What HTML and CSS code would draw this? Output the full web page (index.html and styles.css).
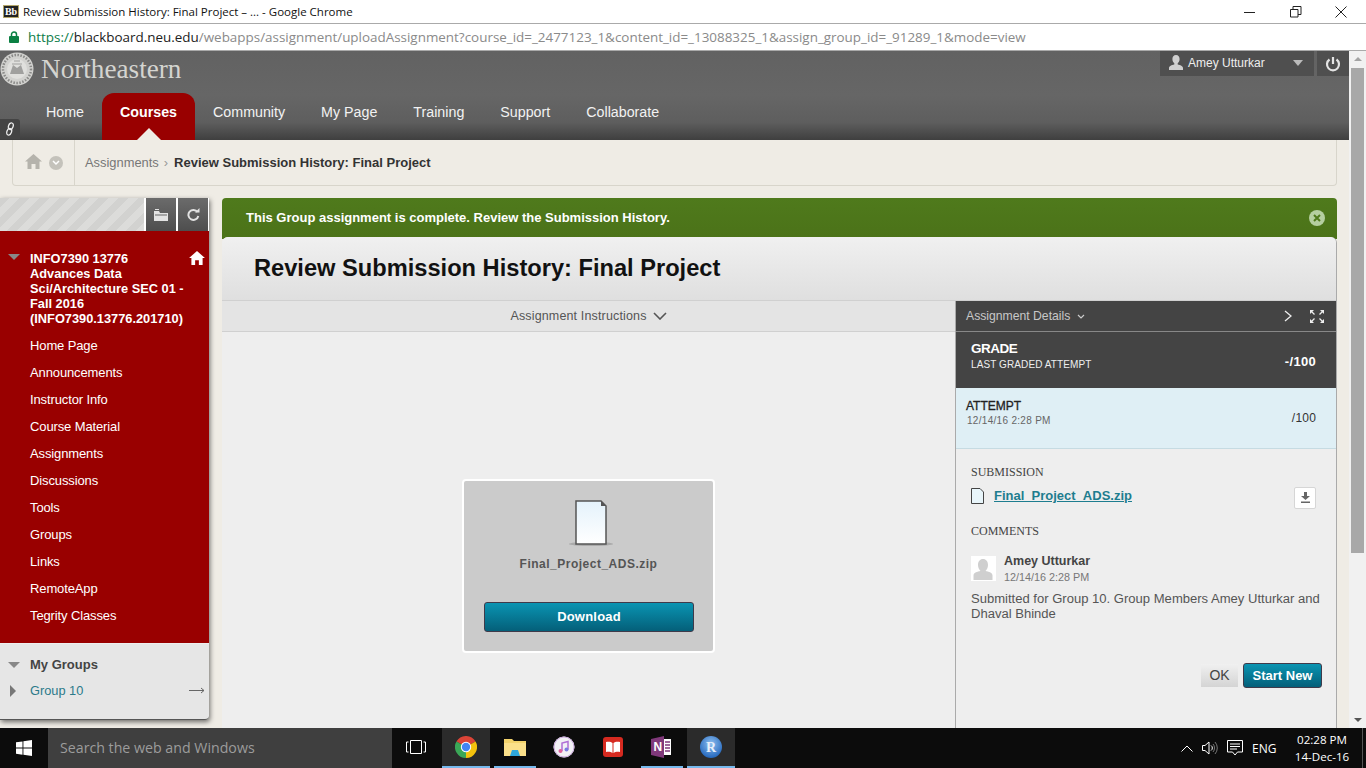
FILE: index.html
```html
<!DOCTYPE html>
<html lang="en">
<head>
    <meta charset="UTF-8">
    <title>Review Submission History: Final Project</title>
    <link rel="stylesheet" href="styles.css">
</head>
<body>
    <div class="titlebar">
        <span class="favicon">Bb</span>
        <span class="window-title">Review Submission History: Final Project – ... - Google Chrome</span>
        <div class="window-controls">
            <svg width="12" height="12" viewBox="0 0 12 12"><path d="M0 6.5h11" stroke="#222" fill="none"/></svg>
            <svg width="12" height="12" viewBox="0 0 12 12"><path d="M.5 3.500h7.500v7.500h-7.500zM3 3V.5h8v8H8" stroke="#222" fill="none"/></svg>
            <svg width="12" height="12" viewBox="0 0 12 12"><path d="M.5 .5l11 11M11.500 .5l-11 11" stroke="#222" fill="none"/></svg>
        </div>
    </div>
    <div class="addressbar">
        <svg width="10" height="12" viewBox="0 0 10 12"><path d="M2.500 5V3.500a2.500 2.500 0 0 1 5 0V5" stroke="#0b8043" stroke-width="1.500" fill="none"/><rect y="5" width="10" height="7" rx="1" fill="#0b8043"/></svg>
        <span class="url"><span class="url-scheme">https://</span><span class="url-host">blackboard.neu.edu</span>/webapps/assignment/uploadAssignment?course_id=_2477123_1&amp;content_id=_13088325_1&amp;assign_group_id=_91289_1&amp;mode=view</span>
    </div>

    <div class="viewport">
        <div class="page">
            <header class="header">
                <div class="brand-row">
                    <svg class="seal" width="34" height="34" viewBox="0 0 34 34">
                        <circle cx="17" cy="17" r="16.500" fill="#d2d2cf"/>
                        <circle cx="17" cy="17" r="14" fill="none" stroke="#8a8a88" stroke-dasharray="1.500 1.500" stroke-width="2.500"/>
                        <circle cx="17" cy="17" r="10" fill="#e0e0dd"/>
                        <path d="M10 22l3-9 4 3 4-3 3 9z" fill="#a0a09e"/>
                        <path d="M12 12h10M14 9h6" stroke="#a0a09e"/>
                    </svg>
                    <span class="brand">Northeastern</span>
                    <div class="user-menu">
                        <svg width="16" height="15" viewBox="0 0 16 15"><path d="M8 0c2.400 0 3.600 1.800 3.600 4 0 2-1 3.600-1.900 4.300v1.200c2.600.6 5.300 1.500 5.300 3.500V15H1v-2c0-2 2.700-2.900 5.300-3.500V8.300C5.400 7.600 4.400 6 4.400 4c0-2.200 1.200-4 3.600-4z" fill="#cfcfcf"/></svg>
                        <span class="user-name">Amey Utturkar</span>
                        <span class="user-caret"></span>
                    </div>
                    <div class="power">
                        <svg width="16" height="16" viewBox="0 0 16 16"><path d="M8 1v7M4.500 3.500a6 6 0 1 0 7 0" stroke="#e4e4e4" stroke-width="2.200" fill="none"/></svg>
                    </div>
                </div>
                <nav class="nav">
                    <a>Home</a>
                    <a class="active">Courses</a>
                    <a>Community</a>
                    <a>My Page</a>
                    <a>Training</a>
                    <a>Support</a>
                    <a>Collaborate</a>
                </nav>
                <span class="link-badge">
                    <svg width="10" height="14" viewBox="0 0 10 14"><ellipse cx="5.800" cy="4.200" rx="2.300" ry="3.400" transform="rotate(20 5.800 4.200)" stroke="#eee" stroke-width="1.300" fill="none"/><ellipse cx="4.200" cy="9.800" rx="2.300" ry="3.400" transform="rotate(20 4.200 9.800)" stroke="#eee" stroke-width="1.300" fill="none"/></svg>
                </span>
            </header>

            <div class="crumb-wrap">
                <div class="crumbs">
                    <div class="crumb-icons">
                        <svg width="17" height="15" viewBox="0 0 17 15"><path d="M8.500 0L17 7.500h-2.500V15h-4v-5h-4v5h-4V7.500H0z" fill="#b5b3ac"/></svg>
                        <span class="crumb-down">
                            <svg width="8" height="6" viewBox="0 0 8 6"><path d="M1 1l3 3 3-3" stroke="#fff" stroke-width="1.500" fill="none"/></svg>
                        </span>
                    </div>
                    <span class="crumb-link">Assignments</span>
                    <span class="crumb-sep">›</span>
                    <span class="crumb-current">Review Submission History: Final Project</span>
                </div>
            </div>

            <div class="main">
                <aside class="sidebar">
                    <div class="side-tools">
                        <div class="hatch"></div>
                        <div class="tool">
                            <svg width="14" height="12" viewBox="0 0 14 12"><path d="M0 2h5l1 2h8v8H0z" fill="#e2e2e2"/><path d="M1 0h4v1H1z" fill="#e2e2e2"/><path d="M1 6h12" stroke="#666"/></svg>
                        </div>
                        <div class="tool">
                            <svg width="13" height="13" viewBox="0 0 13 13"><path d="M10.500 4A5 5 0 1 0 11.300 8" stroke="#e2e2e2" stroke-width="2" fill="none"/><path d="M8 4.500h4.500V0z" fill="#e2e2e2"/></svg>
                        </div>
                    </div>
                    <div class="course-menu">
                        <div class="course-head">
                            <span class="tri-down"></span>
                            <span class="course-name">INFO7390 13776 Advances Data Sci/Architecture SEC 01 - Fall 2016 (INFO7390.13776.201710)</span>
                            <svg class="course-home" width="16" height="14" viewBox="0 0 17 15"><path d="M8.500 0L17 7.500h-2.500V15h-4v-5h-4v5h-4V7.500H0z" fill="#fff"/></svg>
                        </div>
                        <ul class="course-links">
                            <li>Home Page</li>
                            <li>Announcements</li>
                            <li>Instructor Info</li>
                            <li>Course Material</li>
                            <li>Assignments</li>
                            <li>Discussions</li>
                            <li>Tools</li>
                            <li>Groups</li>
                            <li>Links</li>
                            <li>RemoteApp</li>
                            <li>Tegrity Classes</li>
                        </ul>
                    </div>
                    <div class="groups">
                        <div class="groups-head"><span class="tri-down"></span>My Groups</div>
                        <div class="group-row">
                            <span class="tri-right"></span>
                            <span class="group-name">Group 10</span>
                            <span class="group-arrow">
                                <svg width="16" height="7" viewBox="0 0 16 7"><path d="M0 3.500h15M12 1l3 2.500L12 6" stroke="#666" fill="none"/></svg>
                            </span>
                        </div>
                    </div>
                </aside>

                <section class="content">
                    <div class="banner">
                        <span>This Group assignment is complete. Review the Submission History.</span>
                        <span class="banner-close">
                            <svg width="8" height="8" viewBox="0 0 8 8"><path d="M1 1l6 6M7 1L1 7" stroke="#4f7a1c" stroke-width="2"/></svg>
                        </span>
                    </div>
                    <div class="panel">
                        <h1 class="panel-title">Review Submission History: Final Project</h1>
                        <div class="panel-body">
                            <div class="viewer">
                                <div class="instructions">Assignment Instructions
                                    <svg width="14" height="8" viewBox="0 0 14 8"><path d="M1 1l6 6 6-6" stroke="#555" stroke-width="1.600" fill="none"/></svg>
                                </div>
                                <div class="viewer-stage">
                                    <div class="file-card">
                                        <svg class="file-big" width="44" height="48" viewBox="0 0 44 48">
                                            <defs>
                                                <linearGradient id="paper" x1="0" y1="0" x2="0" y2="1"><stop offset="0" stop-color="#e4f2fb"/><stop offset="1" stop-color="#fff"/></linearGradient>
                                            </defs>
                                            <ellipse cx="22" cy="44" rx="22" ry="2" fill="#aaa"/>
                                            <path d="M7 1h25l5 5v38H7z" fill="url(#paper)" stroke="#555" stroke-width="1.500"/>
                                            <path d="M32 1l5 5h-5z" fill="#555"/>
                                        </svg>
                                        <div class="file-name">Final_Project_ADS.zip</div>
                                        <a class="btn-download">Download</a>
                                    </div>
                                </div>
                            </div>

                            <div class="details">
                                <div class="details-head">
                                    <span>Assignment Details</span>
                                    <svg width="8" height="5" viewBox="0 0 8 5"><path d="M1 1l3 3 3-3" stroke="#ccc" stroke-width="1.200" fill="none"/></svg>
                                    <svg class="details-next" width="8" height="12" viewBox="0 0 8 12"><path d="M1 1l6 5-6 5" stroke="#eee" stroke-width="1.300" fill="none"/></svg>
                                    <svg width="16" height="15" viewBox="0 0 16 15"><path d="M1 1h4L1 5zM15 1h-4l4 4zM1 14h4l-4-4zM15 14h-4l4-4z" fill="#eee"/><path d="M2 2l3.500 3.500M14 2l-3.500 3.500M2 13l3.500-3.500M14 13l-3.500-3.500" stroke="#eee" stroke-width="1.300"/></svg>
                                </div>
                                <div class="grade-row">
                                    <div>
                                        <div class="grade-label">GRADE</div>
                                        <div class="grade-sub">LAST GRADED ATTEMPT</div>
                                    </div>
                                    <div class="grade-value">-/100</div>
                                </div>
                                <div class="attempt-row">
                                    <div>
                                        <div class="attempt-label">ATTEMPT</div>
                                        <div class="attempt-date">12/14/16 2:28 PM</div>
                                    </div>
                                    <div class="attempt-value">/100</div>
                                </div>
                                <div class="details-body">
                                    <div class="section-label">SUBMISSION</div>
                                    <div class="sub-row">
                                        <svg width="13" height="16" viewBox="0 0 13 16"><path d="M.5.500h8.500l3.500 3.500v11.500H.5z" fill="#e8f5fa" stroke="#444"/></svg>
                                        <a class="sub-link">Final_Project_ADS.zip</a>
                                        <span class="sub-download">
                                            <svg width="9" height="11" viewBox="0 0 9 11"><path d="M3 0h3v4h3L4.500 8 0 4h3zM0 9.500h9V11H0z" fill="#666"/></svg>
                                        </span>
                                    </div>
                                    <div class="section-label comments-label">COMMENTS</div>
                                    <div class="comment-head">
                                        <span class="avatar">
                                            <svg width="24" height="24" viewBox="0 0 24 24"><path d="M12 3c3 0 5 2.500 5 6 0 3-1.500 5-2.500 6 3 .6 7 1.500 7 4.500V24H2.500v-4.500c0-3 4-3.900 7-4.500C8.500 14 7 12 7 9c0-3.500 2-6 5-6z" fill="#cfcfcf"/></svg>
                                        </span>
                                        <div class="comment-meta">
                                            <div class="comment-author">Amey Utturkar</div>
                                            <div class="comment-date">12/14/16 2:28 PM</div>
                                        </div>
                                    </div>
                                    <p class="comment-text">Submitted for Group 10. Group Members Amey Utturkar and Dhaval Bhinde</p>
                                    <div class="actions">
                                        <a class="btn-ok">OK</a>
                                        <a class="btn-new">Start New</a>
                                    </div>
                                </div>
                            </div>
                        </div>
                    </div>
                </section>
            </div>
        </div>
        <div class="scrollbar">
            <span class="scroll-up"></span>
            <div class="scroll-track"><div class="scroll-thumb"></div></div>
            <span class="scroll-down"></span>
        </div>
    </div>

    <footer class="taskbar">
        <div class="start">
            <svg width="16" height="16" viewBox="0 0 16 16"><path d="M0 2.300l6.500-.9v6.200H0zM7.400 1.300L16 0v7.600H7.400zM0 8.500h6.500v6.200L0 13.800zM7.400 8.500H16V16l-8.600-1.200z" fill="#fff"/></svg>
        </div>
        <div class="search">Search the web and Windows</div>
        <div class="task-icons">
            <div class="task task-view">
                <svg width="20" height="14" viewBox="0 0 20 14"><path d="M4.500.5h11v13h-11zM2.500 2H.5v10h2M17.500 2h2v10h-2" stroke="#fff" fill="none"/></svg>
            </div>
            <div class="task task-on">
                <svg width="22" height="22" viewBox="0 0 22 22">
                    <path d="M11 11L1.470 5.500A11 11 0 0 1 20.530 5.500z" fill="#db4437"/>
                    <path d="M11 11L20.530 5.500A11 11 0 0 1 11 22z" fill="#f4c20d"/>
                    <path d="M11 11V22A11 11 0 0 1 1.470 5.500z" fill="#3aa757"/>
                    <circle cx="11" cy="11" r="5.200" fill="#fff"/>
                    <circle cx="11" cy="11" r="4.200" fill="#4285f4"/>
                </svg>
            </div>
            <div class="task task-open task-short">
                <svg width="22" height="18" viewBox="0 0 22 18"><path d="M0 1h8l2 2h12v15H0z" fill="#f3d36b"/><path d="M0 5h22v13H0z" fill="#fbe08a"/><path d="M8 12h6l2 6H6z" fill="#2fa8dc"/></svg>
            </div>
            <div class="task">
                <svg width="22" height="22" viewBox="0 0 22 22">
                    <circle cx="11" cy="11" r="10.500" fill="#f2f0f5"/>
                    <circle cx="11" cy="11" r="10" fill="none" stroke="#c9a8dc" stroke-width="1"/>
                    <path d="M9 15V7l6-1.500v8" stroke="#b06fd6" stroke-width="1.500" fill="none"/>
                    <circle cx="7.500" cy="15" r="2" fill="#e0609a"/>
                    <circle cx="13.500" cy="13.500" r="2" fill="#7a7ce0"/>
                </svg>
            </div>
            <div class="task">
                <svg width="20" height="20" viewBox="0 0 20 20"><rect width="20" height="20" rx="3" fill="#d62a20"/><path d="M3 5c2.500-.6 5-.4 6.500 1v10C8 14.800 5.500 14.600 3 15zM17 5c-2.500-.6-5-.4-6.500 1v10c1.500-1.200 4-1.400 6.500-1z" fill="#fff"/></svg>
            </div>
            <div class="task task-open">
                <svg width="22" height="22" viewBox="0 0 22 22"><path d="M0 3l13-3v22L0 19z" fill="#80397b"/><path d="M13 3h7v16h-7z" fill="#fff"/><path d="M14 6h5M14 9h5M14 12h5M14 15h5" stroke="#80397b" stroke-width="1.500"/><text x="2.500" y="15" class="onenote-letter">N</text></svg>
            </div>
            <div class="task task-on">
                <svg width="22" height="22" viewBox="0 0 22 22">
                    <defs>
                        <radialGradient id="rball" cx=".5" cy=".35" r=".7"><stop offset="0" stop-color="#8fc0f0"/><stop offset="1" stop-color="#1a5fb8"/></radialGradient>
                    </defs>
                    <circle cx="11" cy="11" r="11" fill="url(#rball)"/>
                    <text x="11" y="16" text-anchor="middle" class="r-letter">R</text>
                </svg>
            </div>
        </div>
        <div class="tray">
            <svg width="12" height="7" viewBox="0 0 12 7"><path d="M.5 6.500l5.500-5.500 5.500 5.500" stroke="#fff" fill="none"/></svg>
            <svg class="tray-sound" width="16" height="14" viewBox="0 0 16 14"><path d="M.5 4.500h2.500l4-3.500v12l-4-3.500H.5zM9 4.500a3 3 0 0 1 0 5" stroke="#fff" fill="none"/><path d="M11 3a6 6 0 0 1 0 8M13 1a9 9 0 0 1 0 12" stroke="#777" fill="none"/></svg>
            <svg class="tray-note" width="16" height="16" viewBox="0 0 16 16"><path d="M.5.500h15v11.500h-5l-2.500 3-2.500-3h-5zM3 4h10M3 6.500h10M3 9h7" stroke="#fff" fill="none"/></svg>
            <span class="tray-lang">ENG</span>
            <div class="clock"><div>02:28 PM</div><div>14-Dec-16</div></div>
            <span class="show-desktop"></span>
        </div>
    </footer>
</body>
</html>
```

FILE: styles.css
```css
* {
    box-sizing: border-box;
}
html, body {
    height: 100%;
}
body {
    margin: 0;
    display: flex;
    flex-direction: column;
    overflow: hidden;
    font-family: "Liberation Sans", Arial, sans-serif;
    background-color: #efece5;
}
svg {
    display: block;
    flex: none;
}

/* browser chrome */
.titlebar {
    height: 24px;
    flex: none;
    display: flex;
    align-items: center;
    padding-left: 3px;
    background-color: #fff;
    border-bottom: 1px solid #aaa;
}
.favicon {
    width: 16px;
    height: 13px;
    margin-right: 4px;
    background-color: #222;
    border: 1px solid #b5a76a;
    color: #fff;
    font: bold 10px/11px "Liberation Serif", serif;
    text-align: center;
}
.window-title {
    font: 11.5px "Open Sans", sans-serif;
    color: #111;
}
.window-controls {
    margin-left: auto;
    display: flex;
    gap: 33.5px;
    padding-right: 19px;
}
.addressbar {
    height: 27px;
    flex: none;
    display: flex;
    align-items: center;
    padding-left: 9px;
    background-color: #fff;
    border-bottom: 1px solid #aaa;
}
.url {
    margin-left: 9px;
    font: 13.43px "Open Sans", sans-serif;
    color: #8a8a8a;
}
.url-scheme {
    color: #0b7c47;
}
.url-host {
    color: #222;
}

/* page frame */
.viewport {
    flex: 1;
    min-height: 0;
    display: flex;
}
.page {
    flex: 1;
    min-width: 0;
    overflow: hidden;
    display: flex;
    flex-direction: column;
}
.scrollbar {
    width: 17px;
    flex: none;
    display: flex;
    flex-direction: column;
    align-items: center;
    background-color: #f1f1f1;
}
.scroll-up {
    margin-top: 6px;
    border: 4px solid transparent;
    border-top: 0;
    border-bottom: 4px solid #a3a3a3;
}
.scroll-track {
    flex: 1;
    width: 100%;
    padding: 7px 2px 0;
}
.scroll-thumb {
    height: 485px;
    background-color: #a8a8a8;
}
.scroll-down {
    margin-bottom: 6px;
    border: 4px solid transparent;
    border-bottom: 0;
    border-top: 4px solid #555;
}

/* site header */
.header {
    position: relative;
    height: 89px;
    flex: none;
    background: linear-gradient(#626262 0, #666 50%, #5e5e5e 80%, #3f3f3f 100%);
}
.brand-row {
    height: 42px;
    display: flex;
    align-items: flex-start;
}
.seal {
    margin-top: 1px;
}
.brand {
    margin: 3px 0 0 7px;
    font: 27.2px/30px "Liberation Serif", serif;
    color: #d4d4d0;
}
.user-menu {
    margin-left: auto;
    width: 154px;
    height: 25px;
    display: flex;
    align-items: center;
    padding: 0 8px 2px;
    background-color: #4f4f4f;
    color: #eee;
    font-size: 12px;
}
.user-name {
    margin-left: 4px;
}
.user-caret {
    margin-left: auto;
    margin-right: 3px;
    border: 5px solid transparent;
    border-bottom: 0;
    border-top: 6px solid #bbb;
}
.power {
    width: 32px;
    height: 25px;
    margin-left: 3px;
    display: flex;
    align-items: center;
    justify-content: center;
    background-color: #4f4f4f;
}
.nav {
    height: 47px;
    display: flex;
    padding-left: 28px;
}
.nav a {
    padding: 11px 18px 0;
    font-size: 14.25px;
    line-height: 16px;
    color: #f2f2f2;
}
.nav a.active {
    position: relative;
    background-color: #990000;
    border-radius: 12px 12px 0 0;
    font-weight: bold;
    color: #fff;
}
.nav a.active::after {
    content: "";
    position: absolute;
    left: 50%;
    bottom: 0;
    margin-left: -12px;
    border: 12px solid transparent;
    border-top: 0;
    border-bottom: 12px solid #efece5;
}
.link-badge {
    position: absolute;
    left: 0;
    bottom: 1px;
    width: 20px;
    height: 20px;
    display: flex;
    align-items: center;
    justify-content: center;
    background-color: #444;
    border-radius: 0 3px 0 0;
}

/* breadcrumbs */
.crumb-wrap {
    flex: none;
    padding: 0 12px;
    height: 46px;
}
.crumbs {
    height: 46px;
    display: flex;
    align-items: center;
    border: 1px solid #d8d5cb;
    border-top: 0;
    border-radius: 0 0 4px 4px;
    font-size: 12.9px;
    color: #777;
}
.crumb-icons {
    width: 62px;
    height: 100%;
    display: flex;
    align-items: center;
    gap: 7px;
    padding: 0 0 3px 12px;
    border-right: 1px solid #d8d5cb;
    margin-right: 10px;
}
.crumb-down {
    width: 14px;
    height: 14px;
    margin-top: 3px;
    border-radius: 50%;
    background-color: #c4c2bb;
    display: flex;
    align-items: center;
    justify-content: center;
}
.crumb-sep {
    margin: 0 6px 0 5px;
    color: #999;
}
.crumb-current {
    font-size: 13px;
    font-weight: bold;
    color: #333;
}

/* two columns */
.main {
    flex: 1;
    min-height: 0;
    display: flex;
    align-items: flex-start;
    padding-top: 12px;
}
.sidebar {
    width: 209px;
    flex: none;
    border-radius: 0 0 4px 0;
    box-shadow: 1px 2px 5px rgba(0, 0, 0, .55);
    font-size: 14px;
}
.side-tools {
    height: 33px;
    display: flex;
    background-color: #fff;
    gap: 2px;
}
.hatch {
    flex: 1;
    background: repeating-linear-gradient(135deg, #d2d2d0 0 7px, #dcdcda 7px 14px);
}
.tool {
    width: 30px;
    display: flex;
    align-items: center;
    justify-content: center;
    background: linear-gradient(#6b6b6b, #4e4e4e);
}
.tool:last-child {
    margin-right: 1px;
}
.course-menu {
    height: 412px;
    background-color: #990000;
    color: #fff;
    padding-top: 20px;
}
.tri-down {
    flex: none;
    width: 0;
    border: 6px solid transparent;
    border-bottom: 0;
    border-top: 6px solid #888;
}
.course-head {
    position: relative;
    display: flex;
    align-items: flex-start;
    padding-left: 8px;
    padding-right: 17px;
}
.course-head .tri-down {
    margin-top: 3px;
}
.course-name {
    margin-left: 10px;
    font-weight: bold;
    font-size: 12.8px;
    line-height: 15px;
    width: 160px;
}
.course-home {
    position: absolute;
    right: 4px;
    top: 0;
}
.course-links {
    list-style: none;
    margin: 6px 0 0;
    padding: 0 0 0 30px;
}
.course-links li {
    height: 27px;
    line-height: 27px;
    font-size: 13px;
    letter-spacing: -.12px;
}
.groups {
    height: 77px;
    padding-top: 13px;
    background-color: #e6e6e6;
    border-radius: 0 0 4px 0;
    border-bottom: 1px solid #555;
    border-top: 1px solid #eee;
}
.groups-head {
    display: flex;
    align-items: center;
    padding-left: 8px;
    font-weight: bold;
    font-size: 13px;
    line-height: 15px;
    color: #444;
}
.groups-head .tri-down {
    margin-right: 10px;
}
.group-row {
    display: flex;
    align-items: center;
    margin-top: 11px;
    padding: 0 4px 0 10px;
    color: #2b7a8a;
    line-height: 15px;
}
.tri-right {
    border: 6px solid transparent;
    border-right: 0;
    border-left: 6px solid #777;
    margin-right: 14px;
}
.group-name {
    font-size: 12.8px;
}
.group-arrow {
    margin-left: auto;
}

/* main column */
.content {
    width: 1115px;
    margin-left: 13px;
    flex: none;
}
.banner {
    height: 41px;
    display: flex;
    align-items: center;
    justify-content: space-between;
    padding: 0 12px 2px 24px;
    background: linear-gradient(#4f7a1c, #4b7218);
    border-radius: 4px 4px 0 0;
    color: #fff;
    font-weight: bold;
    font-size: 13px;
}
.banner-close {
    width: 16px;
    height: 16px;
    border-radius: 50%;
    background-color: #b5cfa0;
    display: flex;
    align-items: center;
    justify-content: center;
}
.panel {
    margin-top: -2px;
    background-color: #eee;
    border-radius: 6px 6px 0 0;
    border-right: 1px solid #aaa;
}
.panel-title {
    height: 64px;
    margin: 0;
    padding-left: 32px;
    background: linear-gradient(#f0f0f0, #dfdfdf);
    border-radius: 6px 6px 0 0;
    border-bottom: 1px solid #d0d0d0;
    font-size: 23.65px;
    line-height: 63px;
    color: #111;
}
.panel-body {
    display: flex;
}
.viewer {
    flex: 1;
    min-width: 0;
}
.instructions {
    height: 31px;
    display: flex;
    align-items: center;
    justify-content: center;
    gap: 6px;
    background-color: #e4e4e4;
    border-bottom: 1px solid #d0d0d0;
    font-size: 12.5px;
    letter-spacing: .15px;
    color: #555;
}
.viewer-stage {
    display: flex;
    justify-content: center;
    padding: 147px 0 80px 0;
}
.file-card {
    width: 253px;
    height: 174px;
    padding: 19px 20px 0;
    background-color: #cbcbcb;
    border: 2px solid #fff;
    border-radius: 4px;
    text-align: center;
    margin-left: -1px;
}
.file-big {
    margin: 0 auto;
    transform: translateX(3px);
}
.file-name {
    margin-top: 9px;
    padding-left: 1px;
    font-weight: bold;
    font-size: 12px;
    letter-spacing: .5px;
    color: #555;
}
.btn-download {
    display: block;
    width: 210px;
    height: 30px;
    margin-top: 31px;
    padding-left: 1px;
    border: 1px solid #3f3a4a;
    border-radius: 3px;
    background: linear-gradient(#0a94b2, #045f79);
    color: #fff;
    font-weight: bold;
    font-size: 13px;
    letter-spacing: .2px;
    line-height: 28px;
}

/* details column */
.details {
    width: 381px;
    flex: none;
    border-left: 1px solid #aaa;
}
.details-head {
    height: 31px;
    display: flex;
    align-items: center;
    gap: 7px;
    padding: 0 11px 0 10px;
    background-color: #444;
    border-bottom: 1px solid #888;
    font-size: 12.2px;
    color: #c8c8c8;
}
.details-next {
    margin-left: auto;
    margin-right: 10px;
}
.grade-row,
.attempt-row {
    display: flex;
    justify-content: space-between;
    padding-right: 20px;
}
.grade-row {
    height: 56px;
    padding: 9px 20px 0 15px;
    background-color: #444;
    color: #fff;
}
.grade-label {
    font-weight: bold;
    font-size: 13.5px;
    line-height: 16px;
    letter-spacing: -.5px;
}
.grade-sub {
    margin-top: 1px;
    font-size: 10px;
    line-height: 13px;
    letter-spacing: .1px;
    color: #eee;
}
.grade-value {
    margin-top: 13px;
    font-weight: bold;
    font-size: 13px;
    letter-spacing: .3px;
    line-height: 16px;
}
.attempt-row {
    height: 61px;
    padding: 11px 20px 0 10px;
    background-color: #dfeff5;
    border-bottom: 1px solid #c6dbe2;
}
.attempt-label {
    font-size: 12px;
    line-height: 14px;
    color: #222;
    -webkit-text-stroke: .3px #222;
}
.attempt-date {
    margin-top: 1px;
    padding-left: 1px;
    font-size: 10px;
    line-height: 13px;
    letter-spacing: .3px;
    color: #666;
}
.attempt-value {
    margin-top: 12px;
    font-size: 12px;
    letter-spacing: .2px;
    line-height: 15px;
    color: #333;
}
.details-body {
    padding: 16px 15px 0;
    height: 279px;
}
.section-label {
    font: 12px/14px "Liberation Serif", serif;
    color: #444;
}
.comments-label {
    margin-top: 18px;
}
.sub-row {
    display: flex;
    align-items: center;
    margin-top: 6px;
    height: 21px;
}
.sub-link {
    margin-left: 10px;
    font-weight: bold;
    font-size: 13px;
    color: #1e7d8f;
    text-decoration: underline;
}
.sub-download {
    margin-left: auto;
    margin-right: 5px;
    margin-top: 4px;
    width: 22px;
    height: 22px;
    display: flex;
    align-items: center;
    justify-content: center;
    background-color: #fff;
    border: 1px solid #d6d6d6;
    border-radius: 2px;
}
.comment-head {
    display: flex;
    gap: 8px;
    margin-top: 18px;
}
.avatar {
    width: 25px;
    height: 25px;
    background-color: #fff;
}
.comment-meta {
    margin-top: -2px;
}
.comment-author {
    font-weight: bold;
    font-size: 12.5px;
    line-height: 14px;
    color: #444;
}
.comment-date {
    margin-top: 2px;
    font-size: 10.8px;
    line-height: 14px;
    color: #777;
}
.comment-text {
    margin: 7px 0 0;
    font-size: 13.05px;
    line-height: 15px;
    color: #555;
}
.actions {
    display: flex;
    justify-content: flex-end;
    align-items: center;
    gap: 5px;
    margin-top: 42px;
    margin-right: -1px;
}
.btn-ok {
    width: 37px;
    height: 23px;
    background: linear-gradient(#f0f0f0, #d4d4d4);
    text-align: center;
    font-size: 14px;
    line-height: 23px;
    color: #444;
}
.btn-new {
    width: 79px;
    height: 25px;
    border: 1px solid #3f3a4a;
    border-radius: 3px;
    background: linear-gradient(#0a94b2, #045f79);
    text-align: center;
    font-weight: bold;
    font-size: 13px;
    line-height: 23px;
    color: #fff;
}

/* windows taskbar */
.taskbar {
    height: 40px;
    flex: none;
    display: flex;
    background-color: #0c0c0c;
}
.start {
    width: 48px;
    display: flex;
    align-items: center;
    justify-content: center;
}
.search {
    width: 344px;
    padding-left: 12px;
    background-color: #3f3f3f;
    font: 14.2px/40px "Open Sans", sans-serif;
    color: #9c9c9c;
}
.task-icons {
    display: grid;
    grid-template-columns: 50px 48px 50px 48px 49px 50px 48px;
}
.task {
    display: flex;
    align-items: center;
    justify-content: center;
    border-bottom: 2px solid transparent;
}
.task-view {
    padding-right: 2px;
}
.task-on {
    background-color: #2b2b2b;
    border-bottom-color: #76b9ed;
}
.task-open {
    border-image: linear-gradient(90deg, #0c0c0c 5px, #76b9ed 5px, #76b9ed 45px, #0c0c0c 45px) 1;
}
.onenote-letter {
    font: bold 12px "Liberation Sans", sans-serif;
    fill: #fff;
}
.r-letter {
    font: bold 14px "Liberation Serif", serif;
    fill: #e8f0fa;
}
.tray {
    margin-left: auto;
    display: flex;
    align-items: center;
    color: #fff;
    font: 12px "Open Sans", sans-serif;
}
.tray-sound {
    margin-left: 9px;
}
.tray-note {
    margin-left: 9px;
}
.tray-lang {
    margin-left: 9px;
    width: 28px;
}
.clock {
    width: 70px;
    margin-left: 7px;
    margin-right: 5px;
    text-align: center;
    font-size: 11.6px;
    line-height: 17px;
}
.show-desktop {
    width: 4px;
    height: 100%;
    border-left: 1px solid #555;
}
```
